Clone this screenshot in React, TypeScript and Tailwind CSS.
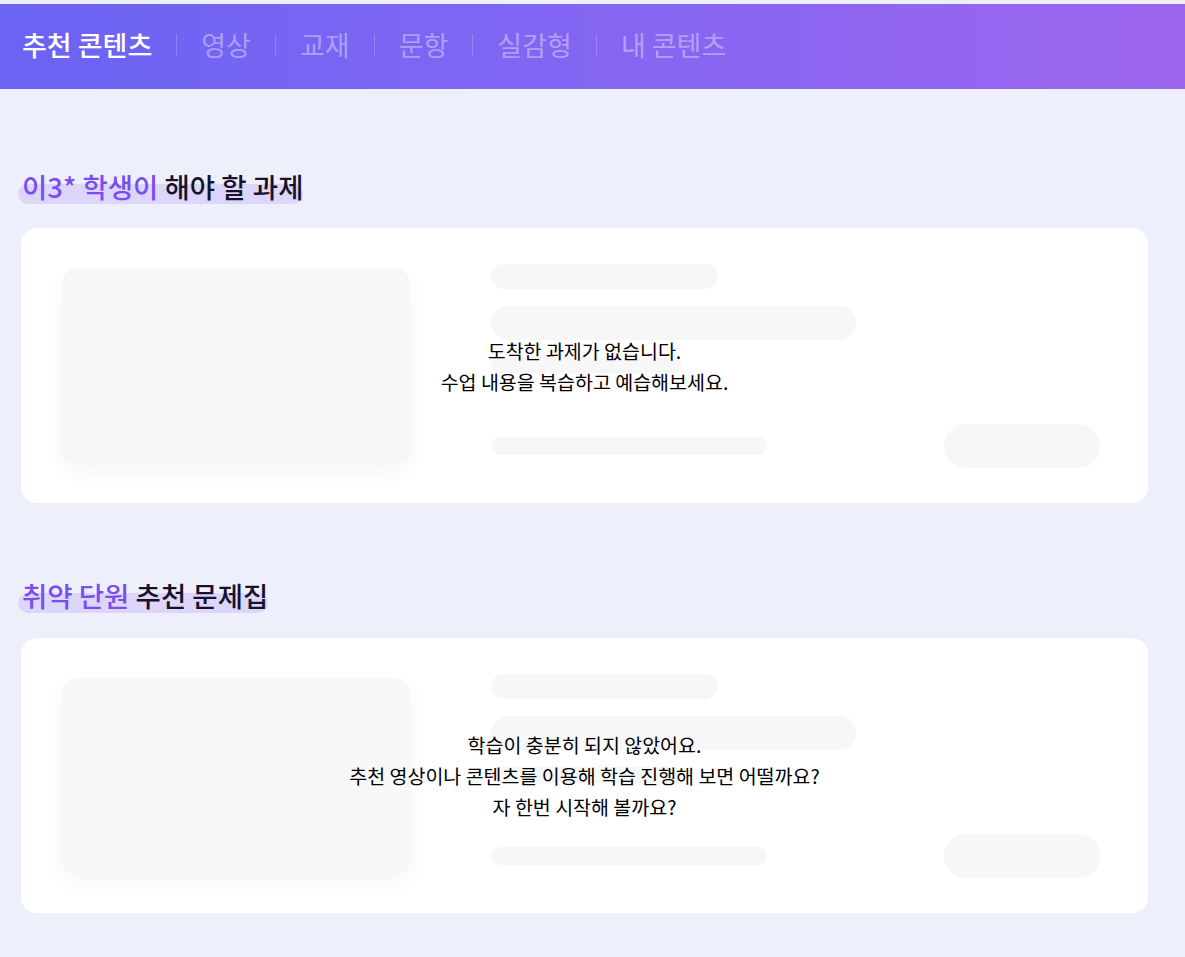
import React from 'react';

const font = '"Noto Sans CJK KR", "Noto Sans", sans-serif';

const tabs = ['추천 콘텐츠', '영상', '교재', '문항', '실감형', '내 콘텐츠'];

function Header() {
  return (
    <header className="mt-1 flex h-[85px] items-center bg-gradient-to-r from-[#6a63f3] via-[#8366f2] to-[#9d65ee] pb-[3px] pl-[22px]">
      {tabs.map((tab, i) => (
        <React.Fragment key={tab}>
          {i > 0 && <span className="mx-[24px] h-[22px] w-px bg-white/20" />}
          <span
            className={
              i === 0
                ? 'text-[27px] font-medium text-white'
                : 'text-[27px] text-white/40'
            }
          >
            {tab}
          </span>
        </React.Fragment>
      ))}
    </header>
  );
}

function SectionTitle({ accent, rest }: { accent: string; rest: string }) {
  return (
    <div className="flex h-[30px] items-center pb-[10px] pl-[18px]">
      <h2 className="relative text-[27.5px] font-medium leading-none">
        <span className="absolute bottom-[-3px] left-0 right-0 h-[20px] rounded-full bg-[#dcd6fb]" />
        <span className="relative pl-1 text-[#7a4cf2]">{accent}</span>{' '}
        <span className="relative text-[#16122a]">{rest}</span>
      </h2>
    </div>
  );
}

function EmptyCard({ lines }: { lines: string[] }) {
  return (
    <div className="relative ml-[21px] mr-[37px] flex h-[275px] rounded-2xl bg-white pl-[41px] pt-[40px]">
      {/* skeleton thumbnail */}
      <div className="h-[197px] w-[348px] rounded-2xl bg-[#f7f7f7] shadow-[0_8px_20px_rgba(0,0,0,0.04)]" />
      {/* skeleton text rows */}
      <div className="ml-[81px] flex w-[609px] flex-col">
        <div className="-mt-[4px] h-[25px] w-[227px] rounded-full bg-[#f7f7f7]" />
        <div className="mt-[17px] h-[34px] w-[365px] rounded-full bg-[#f7f7f7]" />
        <div className="mt-[17px] h-[16px] w-[191px] rounded-full bg-[#f7f7f7]" />
        <div className="mt-[51px] flex items-center justify-between">
          <div className="h-[18px] w-[276px] rounded-full bg-[#f7f7f7]" />
          <div className="h-[44px] w-[156px] rounded-full bg-[#f7f7f7]" />
        </div>
      </div>
      <div className="absolute inset-0 flex flex-col items-center justify-center text-[19.5px] leading-[31px] text-black">
        {lines.map((l) => (
          <p key={l}>{l}</p>
        ))}
      </div>
    </div>
  );
}

export default function App() {
  return (
    <div className="min-h-[957px] overflow-hidden bg-[#edf0fb]" style={{ fontFamily: font }}>
      <Header />
      <section className="pt-[88px]">
        <SectionTitle accent="이3* 학생이" rest="해야 할 과제" />
        <div className="mt-[21px]">
          <EmptyCard lines={['도착한 과제가 없습니다.', '수업 내용을 복습하고 예습해보세요.']} />
        </div>
      </section>
      <section className="pt-[83px]">
        <SectionTitle accent="취약 단원" rest="추천 문제집" />
        <div className="mt-[22px]">
          <EmptyCard
            lines={[
              '학습이 충분히 되지 않았어요.',
              '추천 영상이나 콘텐츠를 이용해 학습 진행해 보면 어떨까요?',
              '자 한번 시작해 볼까요?',
            ]}
          />
        </div>
      </section>
    </div>
  );
}
